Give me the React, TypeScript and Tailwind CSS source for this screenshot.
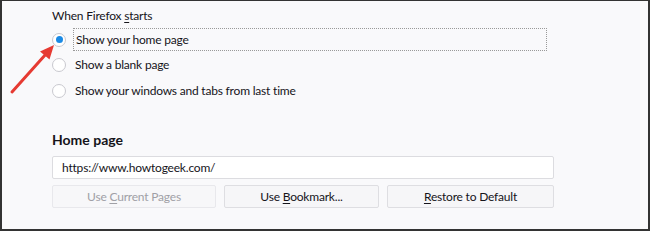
import React from 'react';

const font = { fontFamily: 'Lato, "Segoe UI", sans-serif' };

function Radio({ checked }: { checked?: boolean }) {
  return (
    <div className="w-[14px] h-[14px] rounded-full border border-[#c9c9cf] bg-white flex items-center justify-center shrink-0">
      {checked && <div className="w-[7px] h-[7px] rounded-full bg-[#1a8ae5]" />}
    </div>
  );
}

export default function App() {
  return (
    <div
      className="relative w-[650px] h-[231px] bg-[#f9f9fb] border-t border-x-2 border-b-2 border-[#333] text-[#15141a] text-[12px] tracking-[-0.2px] overflow-hidden"
      style={font}
    >
      <div className="pl-[50px] pt-[6px] flex flex-col">
        {/* Startup */}
        <div className="h-[18px] leading-[18px]">
          When Firefox <span className="underline underline-offset-2">s</span>tarts
        </div>

        <div className="flex flex-col mt-[2px]">
          <div className="h-[25px] flex items-center gap-[7px]">
            <Radio checked />
            <div className="w-[474px] h-[23px] border border-dotted border-[#999] flex items-center pl-[2px]">
              Show your home page
            </div>
          </div>
          <div className="h-[26px] flex items-center gap-[9px]">
            <Radio />
            <span>Show a blank page</span>
          </div>
          <div className="h-[26px] flex items-center gap-[9px]">
            <Radio />
            <span>Show your windows and tabs from last time</span>
          </div>
        </div>

        {/* Home page */}
        <div className="mt-[26px] h-[20px] leading-[20px] text-[14px] font-bold tracking-normal">Home page</div>

        <div className="mt-[6px] w-[502px] h-[23px] bg-white border border-[#dcdce0] rounded-[2px] flex items-center pl-[9px]">
          https://www.howtogeek.com/
        </div>

        <div className="mt-[6px] flex gap-[8px]">
          <button className="w-[164px] h-[23px] bg-[#f7f7f9] border border-[#e8e8ec] rounded-[2px] text-[#a0a0a6]">
            Use <span className="underline underline-offset-2">C</span>urrent Pages
          </button>
          <button className="w-[155px] h-[23px] bg-[#f6f6f8] border border-[#dedee2] rounded-[2px]">
            Use <span className="underline underline-offset-2">B</span>ookmark...
          </button>
          <button className="w-[167px] h-[23px] bg-[#f6f6f8] border border-[#dedee2] rounded-[2px]">
            <span className="underline underline-offset-2">R</span>estore to Default
          </button>
        </div>
      </div>

      {/* Red annotation arrow */}
      <svg className="absolute left-0 top-0" width="650" height="231" viewBox="-2 -1 650 231">
        <line x1="8" y1="90" x2="42" y2="52" stroke="#e63a32" strokeWidth="3" strokeLinecap="round" />
        <polygon points="50,43 36,49.5 45.5,57.5" fill="#e63a32" />
      </svg>
    </div>
  );
}
